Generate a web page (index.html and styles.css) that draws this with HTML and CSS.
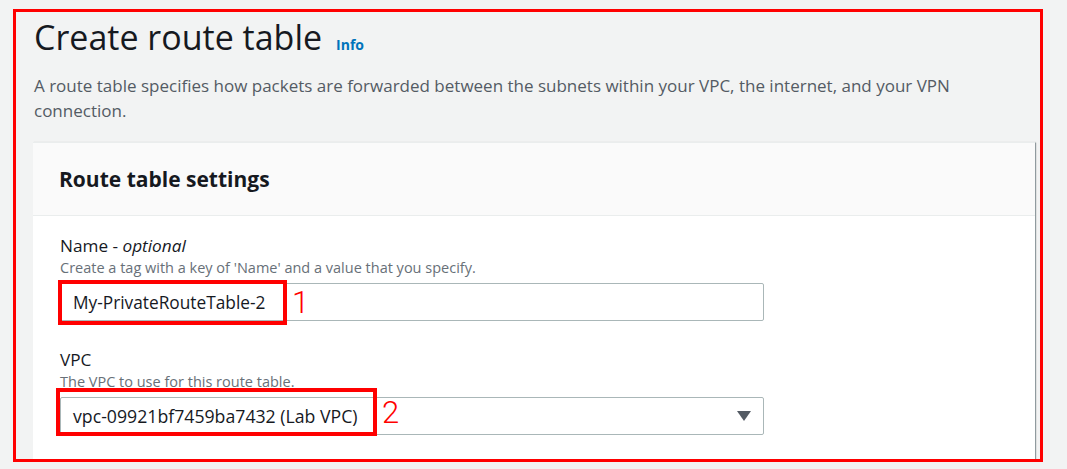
FILE: index.html
```html
<!DOCTYPE html>
<html lang="en">
<head>
<meta charset="utf-8">
<title>Create route table</title>
<link rel="stylesheet" href="styles.css">
</head>
<body>
<div class="frame">
  <header class="page-head">
    <h1 class="title">Create route table <a class="info" href="#">Info</a></h1>
    <p class="desc">A route table specifies how packets are forwarded between the subnets within your VPC, the internet, and your VPN connection.</p>
  </header>
  <section class="card">
    <div class="card-head"><h2 class="card-title">Route table settings</h2></div>
    <div class="card-body">
      <div class="field">
        <div class="label">Name - <i>optional</i></div>
        <div class="hint">Create a tag with a key of 'Name' and a value that you specify.</div>
        <div class="control">
          <div class="input">My-PrivateRouteTable-2</div>
          <span class="mark mark-1"></span>
          <span class="num num-1">1</span>
        </div>
      </div>
      <div class="field">
        <div class="label">VPC</div>
        <div class="hint">The VPC to use for this route table.</div>
        <div class="control">
          <div class="input select">
            <span class="select-value">vpc-09921bf7459ba7432 (Lab VPC)</span>
            <svg class="caret" width="14" height="10" viewBox="0 0 14 10"><path d="M0 0h14L7 10z" fill="#545b64"/></svg>
          </div>
          <span class="mark mark-2"></span>
          <span class="num num-2">2</span>
        </div>
      </div>
    </div>
  </section>
</div>
</body>
</html>
```

FILE: styles.css
```css
* { box-sizing: border-box; }
html, body { margin: 0; padding: 0; }
body {
  background: #f2f3f3;
  font-family: "Open Sans", "Noto Sans", sans-serif;
  color: #16191f;
  width: 1067px;
  height: 469px;
  overflow: hidden;
}
.frame {
  margin: 9px 24px 0 13px;
  height: 453px;
  border: 3px solid #ff0000;
  padding: 0 5px 0 17px;
  overflow: hidden;
}
.page-head { padding: 3px 0 0 1px; }
.title {
  margin: 0;
  font-weight: 400;
  font-size: 34px;
  line-height: 44px;
  color: #16191f;
  display: flex;
  align-items: baseline;
}
.info {
  margin-left: 14px;
  font-size: 14px;
  font-weight: 700;
  color: #0073bb;
  text-decoration: none;
}
.desc {
  margin: 6px 0 0;
  font-size: 17px;
  line-height: 25px;
  color: #545b64;
  max-width: 990px;
}
.card {
  margin-top: 19px;
  background: #fff;
  border-top: 1px solid #eaeded;
  box-shadow: 1px 1px 1px 0 rgba(0,28,36,.3), 1px 0 1px 0 rgba(0,28,36,.15);
}
.card-head {
  background: #fafafa;
  border-bottom: 1px solid #eaeded;
  height: 73px;
  padding: 0 26px;
  display: flex;
  align-items: center;
}
.card-title {
  margin: 0;
  font-size: 21px;
  font-weight: 700;
  color: #16191f;
}
.card-body { padding: 18px 26px 30px 27px; }
.field + .field { margin-top: 27px; }
.label {
  font-size: 17.2px;
  line-height: 24px;
  color: #16191f;
}
.hint {
  font-size: 14.5px;
  line-height: 20px;
  color: #687078;
}
.control {
  position: relative;
  width: 704px;
  margin-top: 5px;
}
.input {
  height: 38px;
  border: 1px solid #aab7b8;
  border-radius: 2px;
  background: #fff;
  padding: 0 12px;
  font-size: 17.3px;
  display: flex;
  align-items: center;
  color: #16191f;
}
.select { justify-content: space-between; padding-right: 12px; }
.select-value { font-size: 17.7px; }
.caret { display: block; }
.mark {
  position: absolute;
  border: 4px solid #ff0000;
}
.mark-1 { left: -2px; top: -3px; width: 229px; height: 45px; }
.mark-2 { left: -4px; top: -9px; width: 321px; height: 48px; }
.num {
  position: absolute;
  font-family: Roboto, "Liberation Sans", sans-serif;
  font-weight: 300;
  color: #ff0000;
  font-size: 31px;
  line-height: 1;
}
.num-1 { left: 232px; top: 4px; }
.num-2 { left: 322px; top: 0; }
```
